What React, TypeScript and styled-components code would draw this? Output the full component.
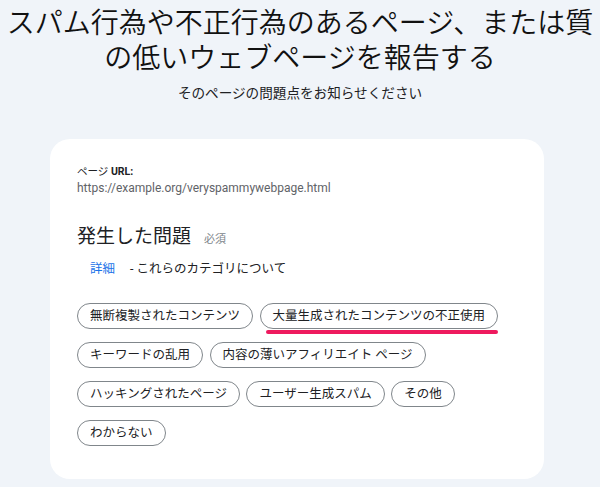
import React from "react";
import styled, { createGlobalStyle } from "styled-components";

const GlobalStyle = createGlobalStyle`
  html, body {
    margin: 0;
    padding: 0;
    background-color: #f0f4f9;
  }
  body {
    font-family: Roboto, "Noto Sans CJK JP", sans-serif;
    color: #202124;
  }
`;

const Page = styled.div`
  padding-top: 6px;
  padding-bottom: 7px;
`;

const Title = styled.h1`
  margin: 0;
  font-size: 28px;
  line-height: 35px;
  font-weight: 350;
  text-align: center;
  color: #111111;
`;

const Subtitle = styled.p`
  margin: 7.5px 0 0;
  font-size: 13.6px;
  line-height: 18px;
  text-align: center;
`;

const Card = styled.section`
  box-sizing: border-box;
  width: 494px;
  margin: 37px 0 0 50px;
  padding: 25px 27px 33px;
  background-color: #ffffff;
  border-radius: 20px;
`;

const FieldLabel = styled.div`
  font-size: 10.5px;
  line-height: 15px;

  b {
    font-weight: 700;
  }
`;

const FieldValue = styled.div`
  font-size: 12px;
  line-height: 18px;
  color: #5f6368;
`;

const SectionHeading = styled.h2`
  margin: 27.5px 0 0;
  font-size: 19px;
  line-height: 26px;
  font-weight: 400;
  display: flex;
  align-items: baseline;
`;

const Required = styled.span`
  margin-left: 13px;
  font-size: 11px;
  color: #80868b;
`;

const HelpLine = styled.div`
  margin-top: 6.5px;
  font-size: 12.5px;
  line-height: 18px;
  padding-left: 13px;
`;

const HelpLink = styled.a`
  color: #1a73e8;
  text-decoration: none;
  margin-right: 15px;
`;

const ChipList = styled.div`
  margin-top: 25px;
  display: flex;
  flex-wrap: wrap;
  column-gap: 6.5px;
  row-gap: 13.3px;
`;

const Chip = styled.button<{ $marked?: boolean }>`
  position: relative;
  box-sizing: border-box;
  height: 26px;
  padding: 0 12px;
  border: 1px solid #80868b;
  border-radius: 9999px;
  background: #ffffff;
  color: #202124;
  font-family: Roboto, "Noto Sans CJK JP", sans-serif;
  font-size: 12.5px;
  line-height: 24px;
  white-space: nowrap;
  cursor: pointer;

  ${(p) =>
    p.$marked &&
    `
    &::after {
      content: "";
      position: absolute;
      left: 5px;
      right: -1px;
      bottom: -6px;
      height: 3.5px;
      border-radius: 2px;
      background-color: #ee1a5e;
    }
  `}
`;

const categories = [
  "無断複製されたコンテンツ",
  "大量生成されたコンテンツの不正使用",
  "キーワードの乱用",
  "内容の薄いアフィリエイト ページ",
  "ハッキングされたページ",
  "ユーザー生成スパム",
  "その他",
  "わからない",
];

const App: React.FC = () => {
  return (
    <>
      <GlobalStyle />
      <Page>
        <Title>
          スパム行為や不正行為のあるページ、または質
          <br />
          の低いウェブページを報告する
        </Title>
        <Subtitle>そのページの問題点をお知らせください</Subtitle>

        <Card>
          <FieldLabel>
            ページ <b>URL:</b>
          </FieldLabel>
          <FieldValue>https://example.org/veryspammywebpage.html</FieldValue>

          <SectionHeading>
            発生した問題
            <Required>必須</Required>
          </SectionHeading>
          <HelpLine>
            <HelpLink href="#">詳細</HelpLink>- これらのカテゴリについて
          </HelpLine>

          <ChipList>
            {categories.map((c) => (
              <Chip key={c} $marked={c === "大量生成されたコンテンツの不正使用"}>
                {c}
              </Chip>
            ))}
          </ChipList>
        </Card>
      </Page>
    </>
  );
};

export default App;
